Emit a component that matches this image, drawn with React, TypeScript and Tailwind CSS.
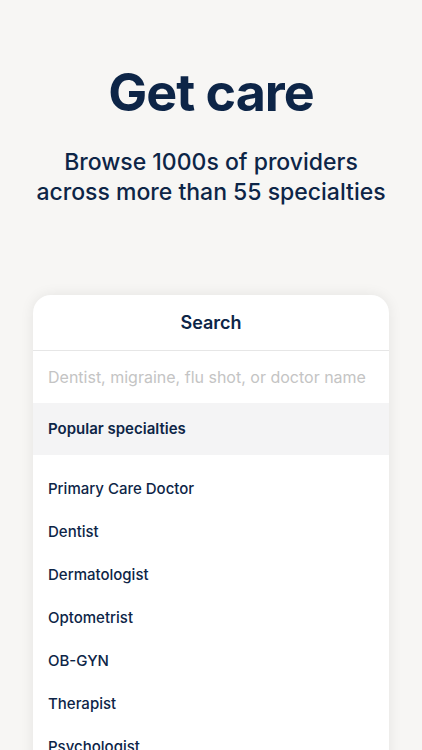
import * as React from 'react';

const SPECIALTIES = [
  'Primary Care Doctor',
  'Dentist',
  'Dermatologist',
  'Optometrist',
  'OB-GYN',
  'Therapist',
  'Psychologist',
];

export default function App() {
  return (
    <div
      className="h-[750px] w-full overflow-hidden bg-[#f7f6f4] text-[#0d2547]"
      style={{ fontFamily: 'Inter, "Noto Sans", sans-serif' }}
    >
      <div className="flex flex-col items-center pt-[61px]">
        <h1 className="text-[52px] font-bold leading-[64px] tracking-[-1px]">Get care</h1>
        <p className="mt-[22px] text-center text-[23px] font-medium leading-[30px]">
          Browse 1000s of providers
          <br />
          across more than 55 specialties
        </p>
      </div>

      <div className="mx-[33px] mt-[88px] overflow-hidden rounded-t-[18px] bg-white shadow-[0_0_14px_rgba(0,0,0,0.08)]">
        <div className="flex h-[56px] items-center justify-center border-b border-[#e6e6e6] text-[18px] font-semibold">
          Search
        </div>
        <div className="flex h-[52px] items-center px-[15px] text-[16px] text-[#c4c4c4]">
          Dentist, migraine, flu shot, or doctor name
        </div>
        <div className="flex h-[52px] items-center bg-[#f4f4f5] px-[15px] text-[15px] font-semibold">
          Popular specialties
        </div>
        <ul className="pt-[13px]">
          {SPECIALTIES.map((s) => (
            <li key={s} className="flex h-[43px] items-center px-[15px] text-[15px] font-medium">
              {s}
            </li>
          ))}
        </ul>
      </div>
    </div>
  );
}
